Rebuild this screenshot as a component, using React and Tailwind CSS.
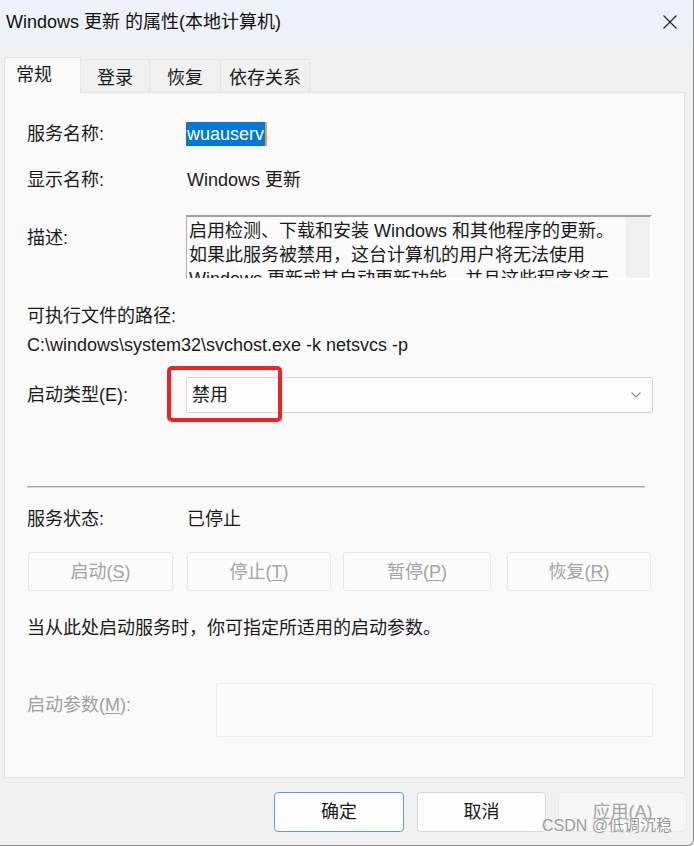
import React from "react";

const FONT = { fontFamily: '"Liberation Sans", "Noto Sans CJK SC", sans-serif' };

function U({ children }) {
  return <span className="underline underline-offset-2">{children}</span>;
}

export default function App() {
  return (
    <div
      className="w-[694px] h-[846px] bg-[#f0f0f0] flex flex-col text-[18px] leading-[24px] text-[#1a1a1a] border-b border-r border-[#8a8a8a] rounded-br-[6px] overflow-hidden"
      style={FONT}
    >
      {/* Title bar */}
      <div className="h-[44px] bg-[#eef2f8] flex items-center justify-between pl-[6px] pr-[12px] shrink-0">
        <span className="text-[18px] text-[#111]">Windows 更新 的属性(本地计算机)</span>
        <svg width="16" height="16" viewBox="0 0 16 16" className="mr-[3px]">
          <path d="M1.5 1.5 L14.5 14.5 M14.5 1.5 L1.5 14.5" stroke="#222" strokeWidth="1.2" fill="none" />
        </svg>
      </div>

      {/* Tabs */}
      <div className="mt-[13px] h-[36px] flex items-end pl-[4px] shrink-0">
        <div className="relative z-10 w-[77px] h-[36px] bg-[#f9f9f9] border border-b-0 border-[#e3e3e3] pl-[11px] pt-[5px]">
          常规
        </div>
        <div className="w-[69px] h-[34px] bg-[#f0f0f0] border border-l-0 border-b-0 border-[#e3e3e3] flex justify-center pt-[6px]">
          登录
        </div>
        <div className="w-[71px] h-[34px] bg-[#f0f0f0] border border-l-0 border-b-0 border-[#e3e3e3] flex justify-center pt-[6px]">
          恢复
        </div>
        <div className="w-[89px] h-[34px] bg-[#f0f0f0] border border-l-0 border-b-0 border-[#e3e3e3] flex justify-center pt-[6px]">
          依存关系
        </div>
      </div>

      {/* Panel */}
      <div className="-mt-px ml-[4px] w-[681px] h-[686px] bg-[#f9f9f9] border border-[#e3e3e3] pl-[22px] shrink-0">
        {/* 服务名称 */}
        <div className="mt-[29px] flex h-[24px]">
          <span className="w-[159px]">服务名称:</span>
          <span className="bg-[#0078d7] text-white border-r-2 border-[#f0a040] px-[1px]">wuauserv</span>
        </div>
        {/* 显示名称 */}
        <div className="mt-[22px] flex h-[24px]">
          <span className="w-[160px]">显示名称:</span>
          <span>Windows 更新</span>
        </div>
        {/* 描述 */}
        <div className="mt-[23px] flex">
          <span className="w-[159px] pt-[11px]">描述:</span>
          <div className="w-[466px] h-[65px] border-t-2 border-l border-t-[#a0a0a0] border-l-[#b0b0b0] border-r-2 border-b-2 border-r-white border-b-white flex overflow-hidden">
            <div className="flex-1 bg-[#fafafa] pl-[2px] pt-[2px] overflow-hidden whitespace-nowrap">
              <div>启用检测、下载和安装 Windows 和其他程序的更新。</div>
              <div>如果此服务被禁用，这台计算机的用户将无法使用</div>
              <div>Windows 更新或其自动更新功能，并且这些程序将无</div>
            </div>
            <div className="w-[24px] bg-[#f0f0f0]" />
          </div>
        </div>
        {/* 可执行文件的路径 */}
        <div className="mt-[24px] h-[24px]">可执行文件的路径:</div>
        <div className="mt-[5px] h-[24px]">C:\windows\system32\svchost.exe -k netsvcs -p</div>
        {/* 启动类型 */}
        <div className="relative mt-[20px] flex items-center">
          <span className="w-[159px]">启动类型(E):</span>
          <div className="w-[467px] h-[36px] bg-[#fdfdfd] border border-[#d4d4d4] rounded-[2px] flex items-center justify-between pl-[5px] pr-[10px]">
            <span>禁用</span>
            <svg width="12" height="8" viewBox="0 0 12 8">
              <path d="M1.5 1.5 L6 6 L10.5 1.5" stroke="#8a8a8a" strokeWidth="1.2" fill="none" />
            </svg>
          </div>
          <div className="absolute left-[140px] -top-[11px] w-[115px] h-[56px] border-[4px] border-[#f42020] rounded-[5px]" />
        </div>
        {/* separator */}
        <div className="mt-[73px] w-[618px] h-[2px] bg-[#a8a8a8] border-b border-[#d8d8d8]" />
        {/* 服务状态 */}
        <div className="mt-[19px] flex h-[24px]">
          <span className="w-[160px]">服务状态:</span>
          <span>已停止</span>
        </div>
        {/* buttons */}
        <div className="mt-[21px] flex h-[39px] text-[#a3a3a3] ml-[1px]">
          <div className="w-[145px] border border-[#e6e6e6] bg-[#fbfbfb] rounded-[3px] flex items-center justify-center">
            启动(<U>S</U>)
          </div>
          <div className="ml-[14px] w-[144px] border border-[#e6e6e6] bg-[#fbfbfb] rounded-[3px] flex items-center justify-center">
            停止(<U>T</U>)
          </div>
          <div className="ml-[12px] w-[148px] border border-[#e6e6e6] bg-[#fbfbfb] rounded-[3px] flex items-center justify-center">
            暂停(<U>P</U>)
          </div>
          <div className="ml-[16px] w-[144px] border border-[#e6e6e6] bg-[#fbfbfb] rounded-[3px] flex items-center justify-center">
            恢复(<U>R</U>)
          </div>
        </div>
        {/* hint */}
        <div className="mt-[25px] h-[24px]">当从此处启动服务时，你可指定所适用的启动参数。</div>
        {/* 启动参数 */}
        <div className="mt-[43px] flex">
          <span className="w-[189px] pt-[10px] text-[#a0a0a0]">
            启动参数(<U>M</U>):
          </span>
          <div className="w-[437px] h-[54px] bg-[#fbfbfb] border border-[#ebebeb] rounded-[2px]" />
        </div>
      </div>

      {/* Bottom buttons */}
      <div className="relative mt-[14px] flex pl-[274px]">
        <div className="w-[130px] h-[40px] bg-[#fdfdfd] border border-[#5b9ed8] rounded-[4px] flex items-center justify-center">
          确定
        </div>
        <div className="ml-[13px] w-[129px] h-[40px] bg-[#fdfdfd] border border-[#d4d4d4] rounded-[4px] flex items-center justify-center">
          取消
        </div>
        <div className="ml-[12px] w-[129px] h-[40px] bg-[#f6f6f6] border border-[#e8e8e8] rounded-[4px] flex items-center justify-center text-[#a3a3a3]">
          应用(A)
        </div>
        <div className="absolute left-[542px] top-[24px] text-[16px] leading-[20px] text-[#9a9a9a] whitespace-nowrap [text-shadow:0_0_2px_#ffffff]">
          CSDN @低调沉稳
        </div>
      </div>
    </div>
  );
}
